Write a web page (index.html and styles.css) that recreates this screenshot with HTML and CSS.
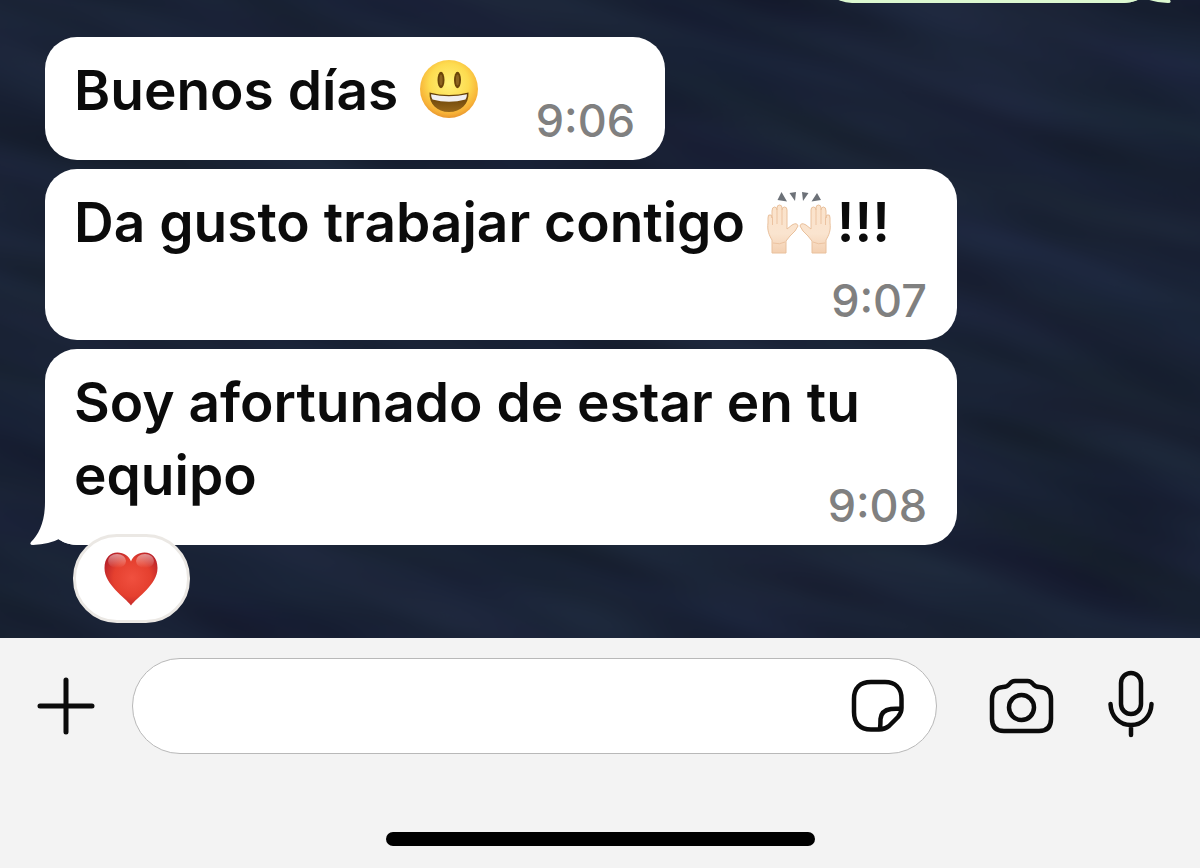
FILE: index.html
```html
<!DOCTYPE html>
<html lang="es">
<head>
    <meta charset="UTF-8">
    <meta name="viewport" content="width=device-width, initial-scale=1.0">
    <title>Chat</title>
    <link rel="stylesheet" href="styles.css">
</head>
<body>
    <main class="chat">
        <!-- wallpaper -->
        <svg class="wallpaper" viewBox="0 0 1200 640" preserveAspectRatio="xMidYMid slice" aria-hidden="true">
            <filter id="waves" x="0" y="0" width="100%" height="100%" color-interpolation-filters="sRGB">
                <feTurbulence type="fractalNoise" baseFrequency="0.004 0.018" numOctaves="2" seed="8" />
                <feColorMatrix type="matrix" values="0.06 0 0 0 0.07
                                                     0.08 0.03 0 0 0.08
                                                     0.1 0 0.04 0 0.14
                                                     0 0 0 0 1" />
            </filter>
            <rect x="-300" y="-500" width="1800" height="1700" transform="rotate(17 600 320)" filter="url(#waves)" />
        </svg>

        <div class="bubble sent">
            <svg class="tail" viewBox="0 0 50 50" aria-hidden="true">
                <path d="M15 0V6C15 26 9 38 1 46Q-1 49 3 49Q20 48 29 43Q35 49 50 49V0Z" />
            </svg>
        </div>

        <div class="bubble first">
            <p class="text">Buenos días <svg class="emoji" viewBox="0 0 60 60" role="img" aria-label="cara sonriente">
                <defs>
                    <radialGradient id="face" cx="50%" cy="40%" r="62%">
                        <stop offset="0" stop-color="#fff27a" />
                        <stop offset="0.55" stop-color="#fddb4f" />
                        <stop offset="0.85" stop-color="#f7b137" />
                        <stop offset="1" stop-color="#e58f2c" />
                    </radialGradient>
                    <linearGradient id="mouth" x1="0" y1="0" x2="0" y2="1">
                        <stop offset="0" stop-color="#5e3b05" />
                        <stop offset="1" stop-color="#98671a" />
                    </linearGradient>
                </defs>
                <circle cx="30" cy="30" r="29" fill="url(#face)" />
                <ellipse cx="22" cy="21" rx="3.5" ry="8.3" fill="#6b4408" />
                <ellipse cx="38.5" cy="21" rx="3.5" ry="8.3" fill="#6b4408" />
                <ellipse cx="22" cy="21" rx="1.6" ry="5.5" fill="#8d6420" />
                <ellipse cx="38.5" cy="21" rx="1.6" ry="5.5" fill="#8d6420" />
                <path d="M10.500 33.500Q30 38.500 49.500 33.500C50 45 42 53 30 53C18 53 10 45 10.500 33.500Z" fill="url(#mouth)" />
                <path d="M12 35.300Q30 39 48 35.300Q48 38 46.500 40.500Q30 45 13.500 40.500Q12 38 12 35.300Z" fill="#f1eff0" />
            </svg></p>
            <time class="time">9:06</time>
        </div>

        <div class="bubble below">
            <p class="text">Da gusto trabajar contigo <svg class="emoji hands" viewBox="0 0 66 64" role="img" aria-label="manos levantadas">
                <defs>
                    <linearGradient id="skin" x1="0" y1="0" x2="0" y2="1">
                        <stop offset="0" stop-color="#fbe3cb" />
                        <stop offset="0.6" stop-color="#fae4cf" />
                        <stop offset="1" stop-color="#f3cfb0" />
                    </linearGradient>
                    <g id="hand">
                        <path d="M6 63V50C3 45 1 40 2 33V28Q2 24 4 25Q6 24 6 28V21Q6 17 8.500 17Q11 17 11 20V18Q11 15 13.500 15Q16 15 16 18V20Q16 17 18.500 17Q21 17 21 20V39L26 35Q31 32 32 36Q30 41 24 46L20 51V63Z" fill="url(#skin)" stroke="#e9c09c" stroke-width="1" />
                        <path d="M6.500 27V35M11 20V34M16 20V35M7 53Q14 55 19 52" fill="none" stroke="#ecc3a1" stroke-width="1" />
                    </g>
                </defs>
                <use href="#hand" />
                <use href="#hand" transform="matrix(-1 0 0 1 66 0)" />
                <path d="M15.500 2L11.500 10L21 11.500ZM23.500 3L30 2L29 11ZM36 2L42.500 3L37 11ZM51 3L55 10L45.500 11.500Z" fill="#6c7178" />
            </svg>!!!</p>
            <time class="time">9:07</time>
        </div>

        <div class="bubble">
            <svg class="tail" viewBox="0 0 50 50" aria-hidden="true">
                <path d="M15 0V6C15 26 9 38 1 46Q-1 49 3 49Q20 48 29 43Q35 49 50 49V0Z" />
            </svg>
            <p class="text">Soy afortunado de estar en tu equipo</p>
            <time class="time">9:08</time>
        </div>

        <button class="reaction" type="button" aria-label="Me encanta">
            <svg viewBox="0 0 56 56" aria-hidden="true">
                <defs>
                    <radialGradient id="heart" cx="52%" cy="48%" r="58%">
                        <stop offset="0" stop-color="#f0503f" />
                        <stop offset="0.6" stop-color="#e5402f" />
                        <stop offset="1" stop-color="#b9222a" />
                    </radialGradient>
                    <linearGradient id="shine" x1="0" y1="0" x2="0" y2="1">
                        <stop offset="0" stop-color="#fff" stop-opacity="0.5" />
                        <stop offset="1" stop-color="#fff" stop-opacity="0" />
                    </linearGradient>
                </defs>
                <path d="M27 54.500C21 46 0.500 34 0.500 17C0.500 7 6 1.500 13.500 1.500C20 1.500 25 5 27 10.500C29 5 34 1.500 40.500 1.500C48 1.500 53.500 7 53.500 17C53.500 34 33 46 27 54.500Z" fill="url(#heart)" />
                <ellipse cx="13" cy="10" rx="9" ry="7" fill="url(#shine)" />
                <ellipse cx="41" cy="10" rx="9" ry="7" fill="url(#shine)" />
            </svg>
        </button>
    </main>

    <footer class="composer">
        <form class="bar">
            <button class="icon plus" type="button" aria-label="Adjuntar">
                <svg viewBox="0 0 58 58"><path d="M29 3V55M3 29H55" /></svg>
            </button>
            <div class="field">
                <input type="text" class="message" aria-label="Mensaje">
                <button class="icon sticker" type="button" aria-label="Stickers">
                    <svg viewBox="0 0 54 54"><path d="M50.500 29V20C50.500 9 44 3 34 3H20C9 3 3 9 3 20V33C3 44 9 50.500 20 50.500H28C32 50.500 35 49.500 38 47L47 38C49.500 35 50.500 33 50.500 29ZM50 29.500Q45 29.500 40 30C33 31 30 34 29.500 40Q29.500 45 29 50" /></svg>
                </button>
            </div>
            <button class="icon camera" type="button" aria-label="Cámara">
                <svg viewBox="0 0 66 56"><path d="M14 9C18 9 19 8 20.500 6C22 4 23 3 26 3H38.500C41.500 3 42.500 4 44 6C45.500 8 46.500 9 50.500 9C58 9.500 62 14 62 21V41C62 49 58 53 50 53H15C7 53 3 49 3 41V21C3 14 7 9.500 14 9Z" /><circle cx="32.500" cy="29.500" r="12.500" /></svg>
            </button>
            <button class="icon mic" type="button" aria-label="Nota de voz">
                <svg viewBox="0 0 48 68"><rect x="14" y="3" width="20" height="41" rx="10" /><path d="M3.500 34C4 46 12 55 24 55S44 46 44.500 34M24 55V65" /></svg>
            </button>
        </form>
        <div class="home-indicator"></div>
    </footer>
</body>
</html>
```
FILE: styles.css
```css
* {
    box-sizing: border-box;
}

body {
    margin: 0;
    height: 100vh;
    display: flex;
    flex-direction: column;
    font-family: Inter, "Liberation Sans", sans-serif;
    background-color: #f3f3f3;
}

/* conversation */
.chat {
    position: relative;
    flex: 1;
    min-height: 0;
    display: flex;
    flex-direction: column;
    align-items: flex-start;
    justify-content: flex-end;
    gap: 9px;
    padding: 0 44px 15px 45px;
    background-color: #18233a;
    overflow: hidden;
}

.wallpaper {
    position: absolute;
    top: 0;
    left: 0;
    width: 100%;
    height: 100%;
}

.bubble {
    position: relative;
    flex-shrink: 0;
    max-width: 912px;
    padding: 17px 30px 15px 29px;
    border-radius: 32px;
    background-color: #fff;
}

.sent {
    align-self: flex-end;
    width: 336px;
    height: 123px;
    background-color: #dcf8d0;
}

.first {
    margin-top: 25px;
}

.tail {
    position: absolute;
    left: -15px;
    bottom: -1px;
    width: 50px;
    height: 50px;
    fill: #fff;
}

.sent .tail {
    left: auto;
    right: -15px;
    transform: scaleX(-1);
    fill: #dcf8d0;
}

.text {
    margin: 0;
    font-size: 55px;
    font-weight: 600;
    line-height: 73px;
    color: #0b0b0b;
}

/* keeps room for the time on the last line */
.text::after {
    content: "";
    float: right;
    width: 151px;
    height: 1px;
}

.time {
    display: block;
    width: fit-content;
    margin: -30px 0 0 auto;
    font-size: 45px;
    font-weight: 500;
    line-height: 48px;
    color: #808080;
}

.below .time {
    margin-top: 18px;
}

.emoji {
    width: 60px;
    height: 60px;
    margin: 0 5px 0 7px;
    vertical-align: -9px;
}

.hands {
    width: 66px;
    height: 64px;
    vertical-align: -12px;
}

.reaction {
    position: relative;
    flex-shrink: 0;
    display: flex;
    align-items: center;
    justify-content: center;
    width: 117px;
    height: 89px;
    margin: -20px 0 0 28px;
    padding: 0;
    border: 3px solid #ebe8e4;
    border-radius: 44px;
    background-color: #fff;
}

.reaction svg {
    width: 56px;
    height: 56px;
}

/* message bar */
.composer {
    display: flex;
    flex-direction: column;
    align-items: center;
    height: 230px;
    padding: 20px 0 22px;
    background-color: #f3f3f3;
}

.bar {
    display: flex;
    align-items: center;
    width: 100%;
    padding: 0 45px 0 37px;
}

.field {
    flex: 1;
    min-width: 0;
    display: flex;
    align-items: center;
    height: 96px;
    margin: 0 52px 0 37px;
    padding: 0 31px;
    border: 1px solid #b8b8b8;
    border-radius: 48px;
    background-color: #fff;
}

.message {
    flex: 1;
    min-width: 0;
    border: none;
    outline: none;
    background: none;
    font: inherit;
    font-size: 55px;
}

.icon {
    display: block;
    flex-shrink: 0;
    padding: 0;
    border: none;
    background: none;
}

.icon svg {
    display: block;
    width: 100%;
    height: 100%;
    fill: none;
    stroke: #0b0b0b;
    stroke-width: 4.5;
    stroke-linecap: round;
    stroke-linejoin: round;
}

.plus {
    width: 58px;
    height: 58px;
}

.plus svg {
    stroke-width: 5;
}

.sticker {
    width: 54px;
    height: 54px;
}

.camera {
    width: 66px;
    height: 56px;
    margin-right: 52px;
}

.mic {
    width: 48px;
    height: 68px;
    margin-bottom: 4px;
}

.home-indicator {
    width: 429px;
    height: 14px;
    margin-top: auto;
    border-radius: 7px;
    background-color: #000;
}
```
